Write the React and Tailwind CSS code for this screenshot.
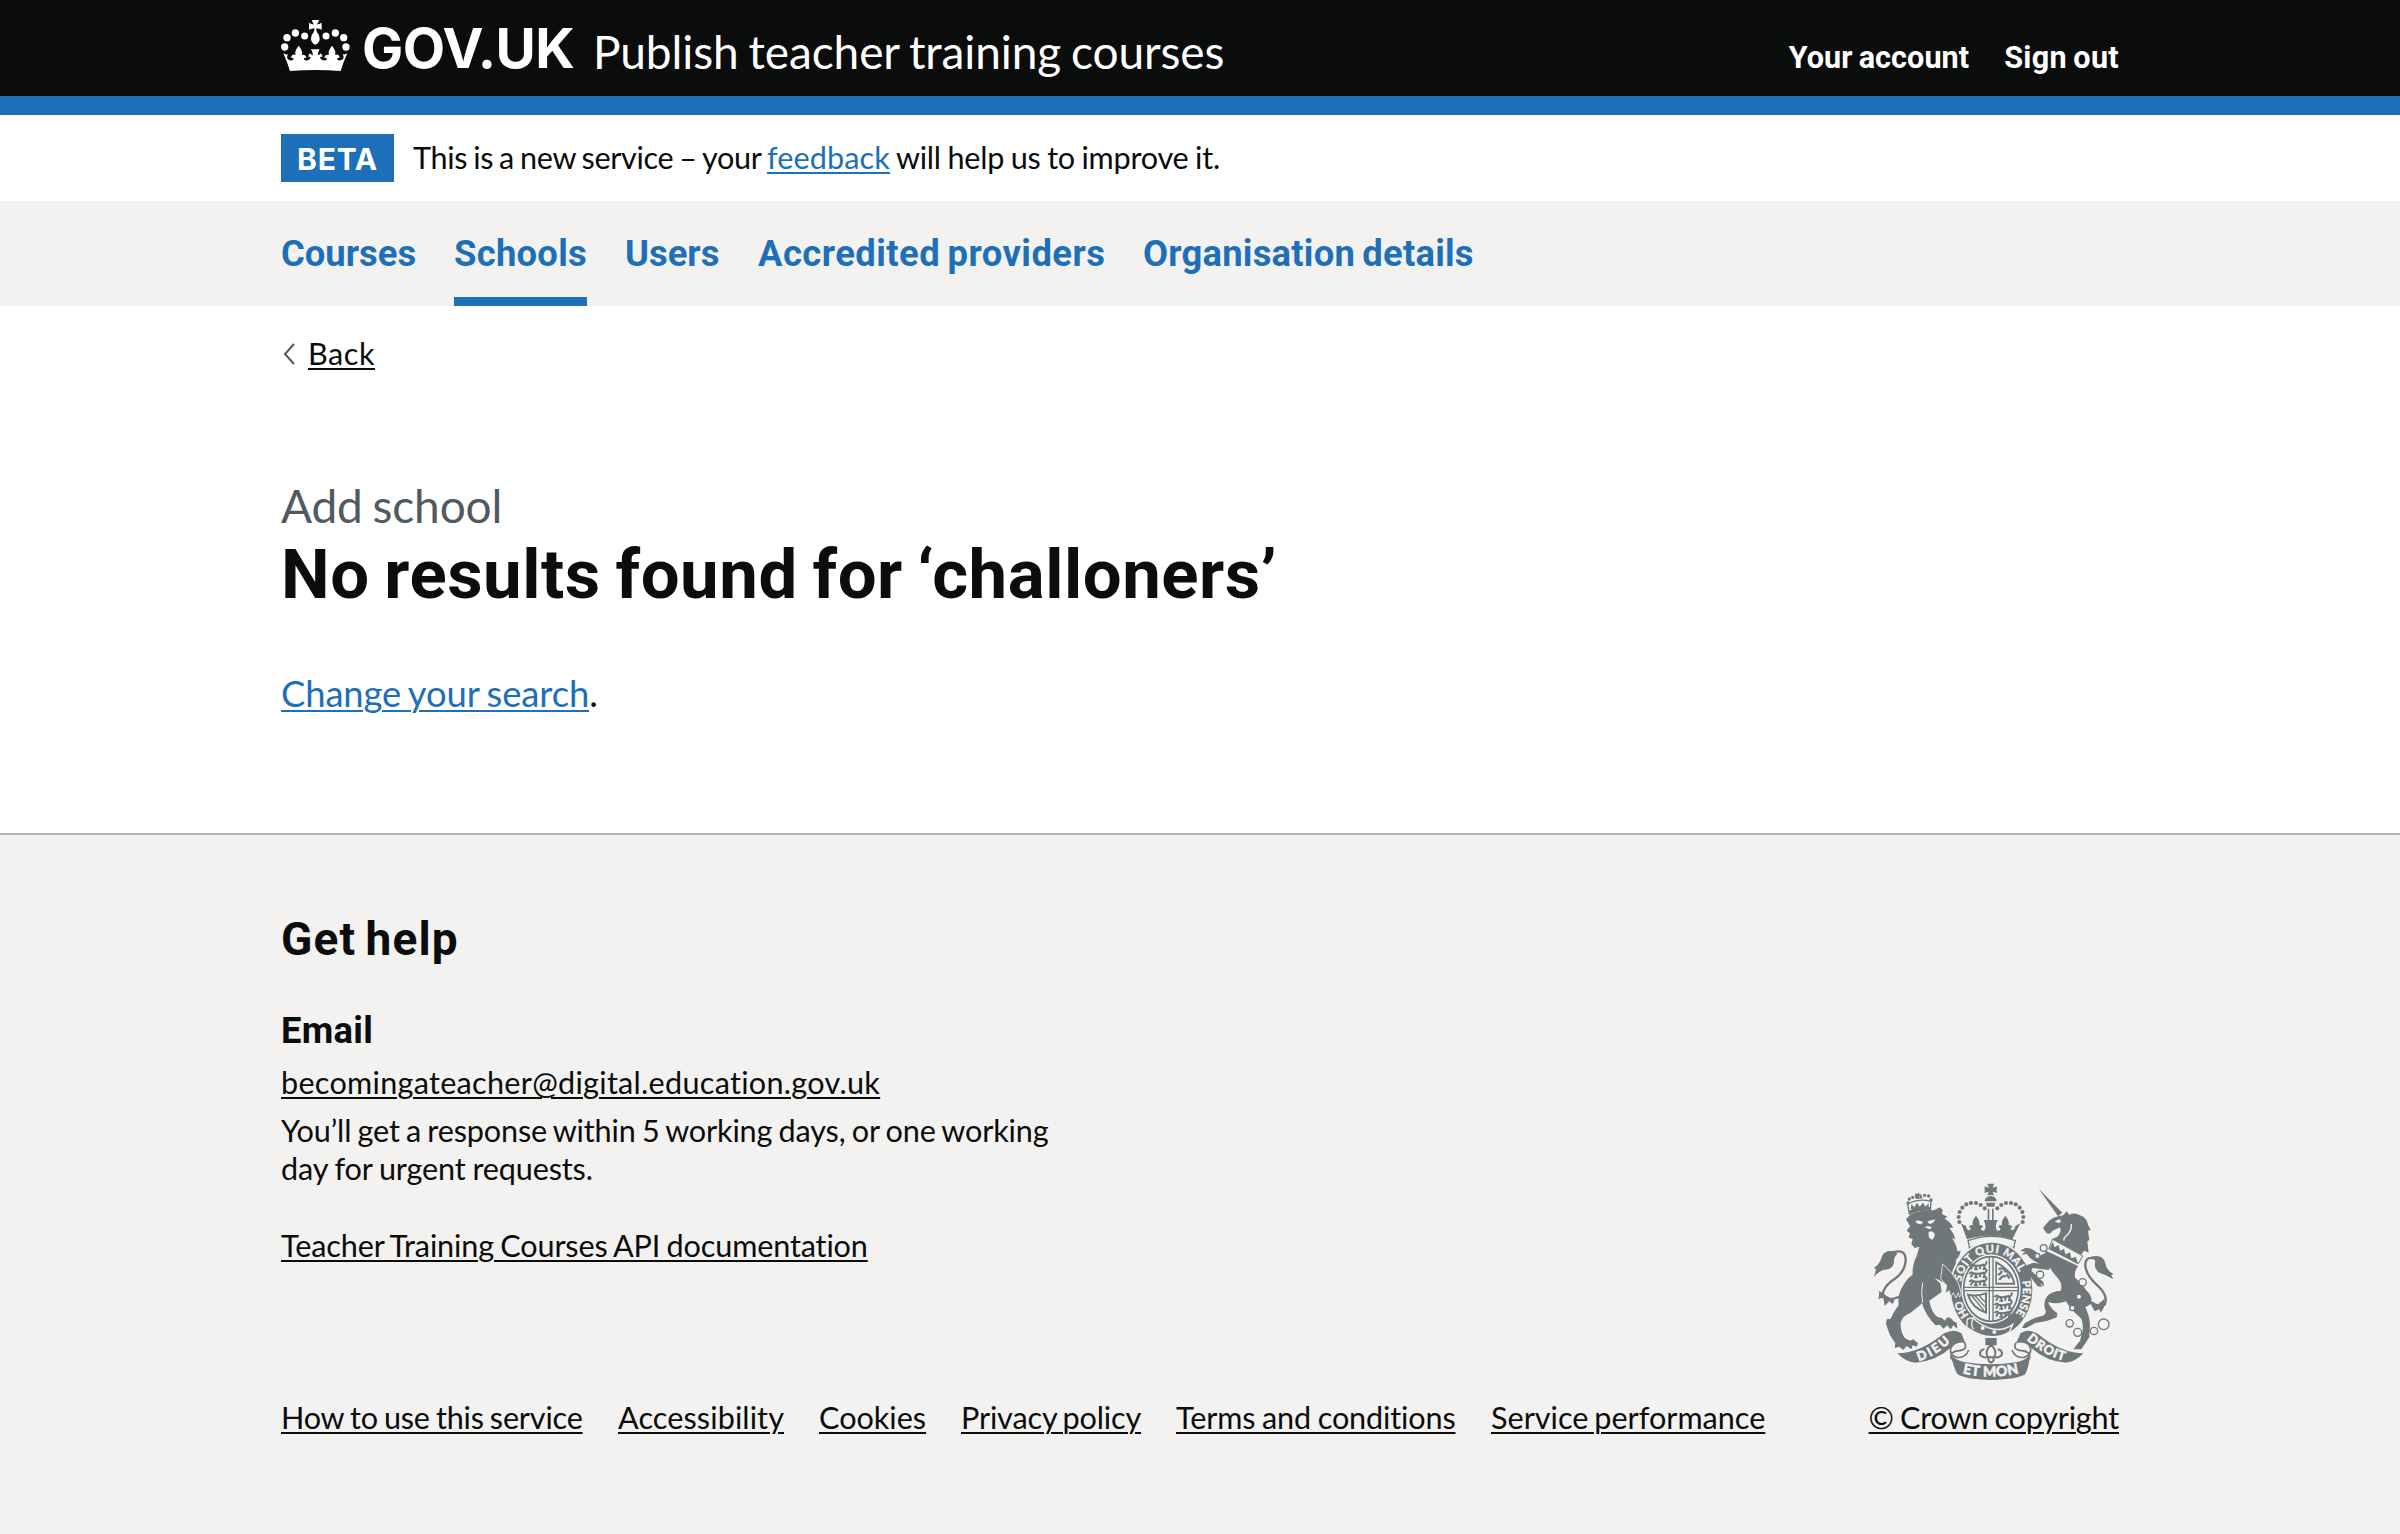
const REG = "font-[Lato,sans-serif] font-normal [font-variant-ligatures:none]";
const BOLD = "font-[Roboto,sans-serif] font-bold";
const LINK = "underline decoration-2 underline-offset-[3px]";

function Crown() {
  return (
    <svg viewBox="15 18 207 153" className="h-[51px] w-[69px] shrink-0 self-start" fill="currentColor">
      <circle cx="26" cy="99" r="11" />
      <circle cx="33" cy="71" r="11" />
      <circle cx="58" cy="57" r="11" />
      <circle cx="86" cy="66" r="10.5" />
      <circle cx="150" cy="66" r="10.5" />
      <circle cx="178" cy="57" r="11" />
      <circle cx="203" cy="71" r="11" />
      <circle cx="210" cy="99" r="11" />
      <path d="M108 18h21q0 7-7 13.500q8 0 15-5v21q-7-5-16-5q-1 7 2 12q8 7 8 20q0 12-13 18q-13-6-13-18q0-13 8-20q3-5 2-12q-9 0-16 5v-21q7 5 15 5q-6-6-6-13.500z" />
      <path d="M22 118q8 5 13 2l-2 12q10 13 20 4q-1-6-8-4q1-12 14-10q-5-10 9-27q14 17 9 27q14-1 14 10q-7-2-8 4q10 9 21-4q-1-5-7-3q0-9 6-11q2 6 8 6q-1-10-6-18h26q-5 8-6 18q6 0 8-6q6 2 6 11q-6-2-7 3q11 13 21 4q-1-6-8-4q0-11 14-10q-5-10 9-27q14 17 9 27q13-2 14 10q-7-2-8 4q10 9 20-4l-2-12q5 3 13-2q-11 24-20 53q-76-6-152 0q-9-29-20-53z" />
    </svg>
  );
}

function CoatOfArms() {
  const bg = "#f3f2f1";
  return (
    <svg viewBox="42 40 720 600" className="h-[200px] w-[240px]" fill="#6f777b">
      <defs>
        <path id="garter" d="M328 441A94 111 0 1 1 462 441" />
        <path id="dieu" d="M176 577Q230 562 280 511" />
        <path id="etmon" d="M300 612Q392 636 488 610" />
        <path id="droit" d="M500 512Q556 564 618 577" />
      </defs>

      {/* lion */}
      <g>
        <path d="M148 136L143 106q34-18 70-8l-2 27q-34-4-63 11z" fill="none" stroke="#6f777b" strokeWidth="4" />
        <path d="M147 126q32-15 66-11l-1 9q-32-3-63 11z" />
        <path d="M152 122l2-16 9 10 8-14 8 12 10-12 7 12 10-10v16z" />
        <circle cx="144" cy="103" r="5" /><circle cx="148" cy="91" r="5" /><circle cx="158" cy="86" r="5" /><circle cx="170" cy="87" r="4" />
        <circle cx="183" cy="86" r="4" /><circle cx="194" cy="80" r="5" /><circle cx="206" cy="82" r="5" /><circle cx="213" cy="94" r="5" />
        <path d="M165 74l7 3 1-4 5 0 0 5 7-1 0 6-7 0 1 7-6 1-1-7-7 1z" />
        <path d="M138 152L152 137Q186 122 222 125L240 116L248 124L246 136L262 144L254 150Q272 160 280 178L268 177Q282 194 286 212L276 208Q290 228 292 248L302 246Q300 262 288 274L286 310Q302 328 302 344L262 350Q250 338 220 327L196 338Q200 372 190 400Q176 414 152 432Q128 440 122 462Q120 486 134 508L150 516L160 512L174 524L170 534L158 530L154 542L140 532L130 544L118 534L104 538L106 524L90 500L78 466L80 452L92 450Q100 430 116 410Q112 376 130 350Q140 330 158 318Q156 290 170 262L178 234L164 238L154 226L158 212L146 206L150 194L140 186L150 172Z" />
        <path d="M166 158Q176 152 190 160L184 167Q172 168 166 158ZM202 158L226 152Q222 164 208 166ZM193 176L204 172L216 176L210 182ZM206 190q12-6 18 6q0 12-8 17q-10-4-10-12z" fill={bg} />
        <path d="M194 332L222 327L241 344L245 370L208 396Q214 432 234 446L246 448L254 456L262 446Q276 448 280 458L290 462L292 480L280 470L272 482L262 470L250 480L240 468L226 470Q196 440 184 398L196 372Z" />
        <path d="M188 342q-6 30 0 60" fill="none" stroke={bg} strokeWidth="3" />
        <path d="M96 252Q138 238 137 276Q134 314 96 336Q62 364 70 386Q88 398 124 382" fill="none" stroke="#6f777b" strokeWidth="7" />
        <path d="M108 250Q78 240 66 262Q62 284 42 298L48 302L42 326Q56 304 84 302Q104 296 102 272Q104 262 112 256zM58 366l-2 26 14-6 4 26 14-14 10 8 6-12-24-12z" />
      </g>

      {/* unicorn */}
      <g>
        <path d="M536 60L607 132L594 143Z" />
        <path d="M549 178L562 162Q576 144 610 140L620 128L628 138Q646 130 660 140Q682 148 684 168L692 184L684 186L688 214L682 218L686 252L672 246L664 258L574 212L592 204Q606 190 600 176L578 186Q572 198 560 194Z" />
        <path d="M584 158l14-6 6 6-8 6z" fill={bg} />
        <path d="M634 166q2 22-16 36q-8 6-6 14" fill="none" stroke={bg} strokeWidth="4" />
        <path d="M578 212L668 262L656 284L566 240Z" fill={bg} stroke="#6f777b" strokeWidth="3" />
        <path d="M568 241l10-21 6 16 12-7 4 17 12-6 4 17 14-6 4 18 14-4 6 22z" />
        <path d="M558 246L654 292Q640 312 646 328Q668 346 680 366Q700 384 692 406L676 416Q688 440 690 468L688 506L672 530L664 542L640 542L660 516L668 486Q670 460 662 448Q632 424 618 398Q590 408 564 400Q572 420 592 434L590 446Q560 460 528 462L498 478L486 478L494 464L524 448L552 440L558 430Q546 402 562 382Q574 368 602 366Q610 346 590 324Q572 304 570 296L548 290Z" />
        <path d="M700 268Q674 264 676 292Q680 322 712 350Q746 380 734 408Q710 420 672 384" fill="none" stroke="#6f777b" strokeWidth="7" />
        <path d="M694 264Q730 256 736 284Q740 306 760 316L754 320L760 332Q740 318 718 312Q700 300 706 278ZM690 402l18 10 26-22-2 26-10 16-4-10-14 6z" />
      </g>

      {/* central crown */}
      <path d="M382 45h20l-4 12 12-4v20l-12-4 4 11h-20l4-11-12 4v-20l12 4zM374 98q0-14 18-16q18 2 18 16zM378 102h28l-3 12h-22z" />
      <path d="M383 120h5v34h-5zM396 120h5v34h-5z" />
      {[[298, 160], [296, 145], [299, 130], [307, 117], [319, 107], [333, 103], [348, 103], [362, 109], [374, 119], [412, 119], [424, 109], [438, 103], [453, 103], [467, 107], [479, 117], [487, 130], [490, 145], [488, 160]].map(([x, y]) => (
        <circle key={`${x}-${y}`} cx={x} cy={y} r="6.200" />
      ))}
      <path d="M303 164l15 8q2 12 9 13q7-2 4-9q-3 0-4 2q0-10 11-9q-4-10 10-28q14 18 10 28q11-1 11 9q-3-3-6 0q-1 9 10 8q8-12-2-32h42q-10 20-2 32q11 1 10-8q-3-3-6 0q0-10 11-9q-4-10 10-28q14 18 10 28q11-1 11 9q-2-2-4-2q-3 7 4 9q7-1 9-13l15-8-24 48q-70-22-136 0z" />
      <path d="M324 216q70-26 142 0q-4 14-4 22q-68-26-134 0q0-10-4-22z" fill={bg} stroke="#6f777b" strokeWidth="4" />

      {/* garter and shield */}
      <ellipse cx="395" cy="363" rx="127" ry="146" fill={bg} />
      <ellipse cx="395" cy="363" rx="122" ry="141" />
      <ellipse cx="393" cy="361" rx="89" ry="104" fill={bg} />
      <ellipse cx="393" cy="361" rx="82" ry="97" fill={bg} stroke="#6f777b" strokeWidth="5" />
      <path d="M386 266h4v190h-4zM397 266h4v190h-4zM313 354h160v4H313zM313 364h160v4H313z" />
      {[[326, 284], [402, 378]].map(([x, y]) => (
        <g key={x} transform={`translate(${x} ${y})`} fill="none" stroke="#6f777b" strokeWidth="6">
          {[0, 24, 48].map((d) => (
            <path key={d} transform={`translate(0 ${d})`} d="M2 8q6-10 12-2q14 4 30-2l6 4M12 8l-6 10M20 8l4 10h-8M36 7l-3 11M44 6l6 11h-8M48 6q8-8 4-12" />
          ))}
        </g>
      ))}
      <path d="M406 276v72h60q-6-44-60-72zM411 286q42 22 48 56h-48z" fillRule="evenodd" />
      <path d="M416 302q14-8 20 6q14 0 20 18m-38 8q10-16 20-10m-12-18q-6 14-12 10m26 0q6 8 8 14" fill="none" stroke="#6f777b" strokeWidth="7" />
      <path d="M324 378q26 6 54-4v58q-42-14-54-54z" fill="none" stroke="#6f777b" strokeWidth="6" />
      <path d="M336 382l36 44M346 382l28 32M357 380l18 20" fill="none" stroke="#6f777b" strokeWidth="4" />
      <path d="M322 452q16-10 26 4q60 46 110 12l-10 22q-60 34-128-14z" stroke={bg} strokeWidth="4" />
      <circle cx="368" cy="478" r="6" fill={bg} />
      <circle cx="403" cy="490" r="6" fill={bg} />
      <path d="M344 444q-16 16-4 38" fill="none" stroke={bg} strokeWidth="4" />
      <g fill={bg} stroke={bg} strokeWidth="1.2" className="font-[Lato,sans-serif] text-[33px] font-bold">
        <text><textPath href="#garter" startOffset="2" textLength="50">HO</textPath></text>
        <text><textPath href="#garter" startOffset="108" textLength="244">SOIT QUI MAL</textPath></text>
        <text><textPath href="#garter" startOffset="380" textLength="102">PENSE</textPath></text>
      </g>

      {/* limbs resting on the garter */}
      <path d="M248 286Q282 316 296 346L304 376L299 386L294 372L288 388L280 372L272 386L268 366L256 374L260 350L242 330Z" stroke={bg} strokeWidth="2.500" />
      <path d="M560 250L540 262Q520 236 496 238L480 246L496 249L484 258L500 256L510 268L524 278L556 294Z" />
      <path d="M574 292Q540 284 520 282L500 290L494 300L498 312L514 328L532 352L546 356L540 344L552 354L550 340L530 322L514 306L518 298L566 304Z" />
      {[[551, 238, 10], [532, 262, 8], [540, 318, 11], [668, 341, 11], [657, 384, 8], [637, 418, 8], [629, 464, 11], [653, 491, 12], [702, 487, 11], [731, 467, 16]].map(([x, y, r]) => (
        <circle key={`${x}-${y}`} cx={x} cy={y} r={r} fill={bg} stroke="#6f777b" strokeWidth="4" />
      ))}

      {/* fleur and motto ribbon */}
      <path d="M376 508h34v22h-34z" />
      <path d="M393 528q-20 20-10 36q-10 6-22-4q-4-16 12-18M393 528q20 20 10 36q10 6 22-4q4-16-12-18M378 566h30M386 568q-4 8 7 14q11-6 7-14" fill="none" stroke="#6f777b" strokeWidth="6" />
      <path d="M112 554Q180 554 252 494Q284 478 304 494L316 524Q298 516 276 534Q228 578 166 582Q136 580 112 554z" />
      <path d="M670 554Q604 554 534 496Q502 478 482 494L468 524Q490 516 510 534Q556 578 618 582Q646 580 670 554z" />
      <path d="M314 522Q324 544 298 546Q268 548 274 572M304 494Q282 512 272 540Q268 560 290 566Q316 570 326 544" fill="none" stroke="#6f777b" strokeWidth="5" />
      <path d="M468 522Q456 544 484 546Q514 548 508 572M482 494Q502 512 512 540Q514 560 492 566Q466 570 456 544" fill="none" stroke="#6f777b" strokeWidth="5" />
      <path d="M272 558Q284 572 312 580Q392 594 472 580Q500 572 510 558Q508 590 496 616Q476 632 392 634Q314 632 292 616Q280 594 272 558z" />
      <g fill={bg} stroke={bg} strokeWidth="2" className="font-[Lato,sans-serif] text-[38px] font-bold">
        <text><textPath href="#dieu" textLength="112">DIEU</textPath></text>
        <text className="text-[42px]"><textPath href="#etmon" startOffset="8" textLength="170">ET MON</textPath></text>
        <text><textPath href="#droit" textLength="130">DROIT</textPath></text>
      </g>
    </svg>
  );
}

const NAV = [
  ["Courses", "w-[135px] tracking-[0px]", false],
  ["Schools", "w-[133px] tracking-[0.26px]", true],
  ["Users", "w-[95px] tracking-[0px]", false],
  ["Accredited providers", "w-[347px] tracking-[0.45px] [word-spacing:-2px]", false],
  ["Organisation details", "w-[332px] tracking-[0.22px] [word-spacing:-2px]", false],
];

const FOOTER = [
  ["How to use this service", "w-[302px] tracking-[-0.2px] [word-spacing:-1.5px]"],
  ["Accessibility", "w-[166px] tracking-[0.1px]"],
  ["Cookies", "w-[107px]"],
  ["Privacy policy", "w-[180px] tracking-[-0.15px] [word-spacing:-2px]"],
  ["Terms and conditions", "w-[280px] tracking-[-0.14px] [word-spacing:-1px]"],
  ["Service performance", "w-[274px] [word-spacing:-2px]"],
];

export default function App() {
  return (
    <div className={`${REG} flex min-h-[1534px] flex-col bg-white text-[30.6px] text-[#0b0c0c]`}>
      <header className="h-[115px] border-b-[19px] border-[#1d70b8] bg-[#0b0c0c] text-white">
        <div className="mx-auto flex w-[1838px] items-baseline pt-[20px]">
          <Crown />
          <span className="ml-[12px] w-[231px] font-[Inter,sans-serif] text-[55px] leading-[56px] font-bold tracking-[-0.5px]">GOV.UK</span>
          <span className="relative top-px text-[46px] leading-[56px] whitespace-nowrap tracking-[-0.1px] [word-spacing:-1.8px]">Publish teacher training courses</span>
          <nav className={`${BOLD} ml-auto flex gap-[35px] leading-[40px] whitespace-nowrap`}>
            <a className="tracking-[0.05px] [word-spacing:-1.5px]">Your account</a>
            <a className="tracking-[0.3px] [word-spacing:-1.5px]">Sign out</a>
          </nav>
        </div>
      </header>

      <div className="mx-auto flex h-[86px] w-[1838px] items-center">
        <strong className="flex h-12 w-[113px] items-center justify-center bg-[#1d70b8] pt-[2px] font-[Inter,sans-serif] text-[30px] font-bold tracking-[0.8px] text-white">BETA</strong>
        <p className="ml-[19px] whitespace-pre">
          <span className="tracking-[-0.35px] [word-spacing:-1.4px]">This is a new service – your </span>
          <a className={`${LINK} text-[#1d70b8] tracking-[0.1px]`}>feedback</a>
          <span className="tracking-[-0.23px] [word-spacing:-1px]"> will help us to improve it.</span>
        </p>
      </div>

      <nav className="h-[105px] bg-[#f3f2f1]">
        <div className={`${BOLD} mx-auto flex h-full w-[1838px] gap-[38px] text-[36.4px] whitespace-nowrap text-[#1d70b8]`}>
          {NAV.map(([label, cls, active]) => (
            <a key={label} className={`${cls} flex items-center border-y-[9px] border-t-transparent pt-[2px] ${active ? "border-b-[#1d70b8]" : "border-b-transparent"}`}>{label}</a>
          ))}
        </div>
      </nav>

      <main className="mx-auto flex h-[527px] w-[1838px] flex-col items-start pt-[29px]">
        <div className="flex h-[38px] items-center">
          <svg viewBox="0 0 12 22" className="ml-[2px] h-[22px] w-[12px]" fill="none" stroke="#505a5f" strokeWidth="2"><path d="M11 1L2 11l9 10" /></svg>
          <a className={`${LINK} ml-[13px] leading-[38px] tracking-[0.53px]`}>Back</a>
        </div>
        <p className="mt-[105px] text-[46px] leading-[56px] tracking-[-0.15px] text-[#505a5f] [word-spacing:-1.8px]">Add school</p>
        <h1 className={`${BOLD} mt-[3px] text-[68.9px] leading-[76px] tracking-[0.55px] whitespace-nowrap [word-spacing:-3px]`}>No results found for ‘challoners’</h1>
        <p className="mt-[56px] text-[36.4px] leading-[48px]">
          <a className={`${LINK} tracking-[-0.12px] text-[#1d70b8] [word-spacing:-1.6px]`}>Change your search</a>.
        </p>
      </main>

      <footer className="flex-1 border-t-2 border-[#b1b4b6] bg-[#f3f2f1]">
        <div className="mx-auto flex w-[1838px] items-end pt-[76px]">
          <div className="flex h-[526px] flex-col items-start whitespace-nowrap">
            <h2 className={`${BOLD} text-[46px] leading-[56px] tracking-[1.1px] [word-spacing:-3px]`}>Get help</h2>
            <h3 className={`${BOLD} mt-[40px] text-[36.4px] leading-[48px] tracking-[0.3px]`}>Email</h3>
            <a className={`${LINK} mt-[9px] leading-[38px] tracking-[0.28px]`}>becomingateacher@digital.education.gov.uk</a>
            <p className="mt-[10px] leading-[38.3px]">
              <span className="tracking-[-0.15px] [word-spacing:-1.4px]">You’ll get a response within 5 working days, or one working</span>
              <br />
              <span className="tracking-[-0.15px] [word-spacing:-0.8px]">day for urgent requests.</span>
            </p>
            <a className={`${LINK} mt-[38px] leading-[38px] tracking-[-0.14px] [word-spacing:-1.3px]`}>Teacher Training Courses API documentation</a>
            <div className="mt-auto flex gap-[35px]">
              {FOOTER.map(([label, cls]) => (
                <a key={label} className={`${LINK} ${cls} leading-[38px]`}>{label}</a>
              ))}
            </div>
          </div>
          <div className="ml-auto flex flex-col items-end">
            <div className="mr-[5px] mb-[17px]"><CoatOfArms /></div>
            <a className={`${LINK} leading-[38px] tracking-[-0.2px] whitespace-nowrap [word-spacing:-1.4px]`}>© Crown copyright</a>
          </div>
        </div>
      </footer>
    </div>
  );
}
